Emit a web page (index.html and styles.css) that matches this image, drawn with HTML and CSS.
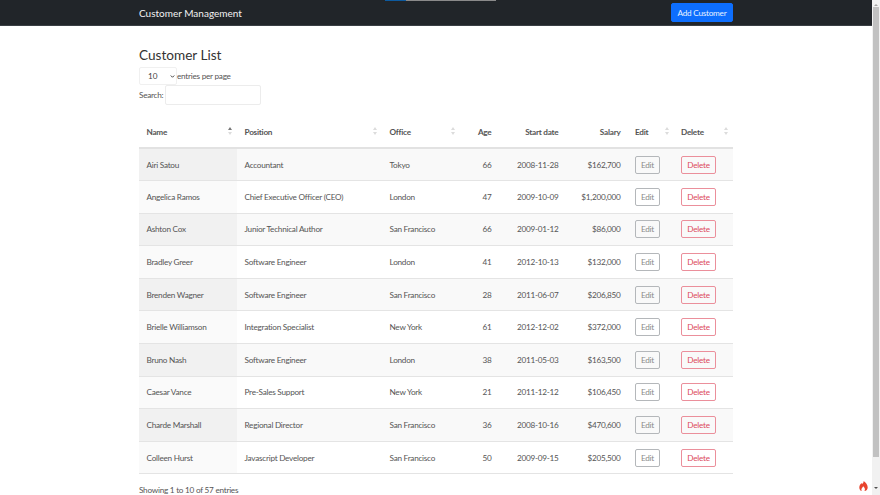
FILE: index.html
```html
<!DOCTYPE html>
<html lang="en">
<head>
    <meta charset="UTF-8">
    <meta name="viewport" content="width=device-width, initial-scale=1.0">
    <title>Customer Management</title>
    <link rel="stylesheet" href="styles.css">
</head>
<body>
    <div class="page">
        <nav class="navbar">
            <div class="loader"><span class="loader-done"></span><span class="loader-rest"></span></div>
            <div class="container navbar-row">
                <a class="brand">Customer Management</a>
                <button class="btn-add" type="button">Add Customer</button>
            </div>
        </nav>

        <main class="container">
            <h1>Customer List</h1>
            <div class="length-row">
                <select class="length-select"><option>10</option></select>
                <label>entries per page</label>
            </div>
            <div class="search-row">
                <label>Search:</label>
                <input class="search-input" type="text">
            </div>

            <table class="customers">
                <colgroup>
                    <col class="c-name"><col class="c-position"><col class="c-office"><col class="c-age">
                    <col class="c-date"><col class="c-salary"><col class="c-edit"><col class="c-delete">
                </colgroup>
                <thead>
                    <tr>
                        <th class="sort sort-asc">Name</th>
                        <th class="sort">Position</th>
                        <th class="sort">Office</th>
                        <th class="num">Age</th>
                        <th class="num">Start date</th>
                        <th class="num">Salary</th>
                        <th class="sort action">Edit</th>
                        <th class="sort action">Delete</th>
                    </tr>
                </thead>
                <tbody>
                    <tr><td class="sorted">Airi Satou</td><td>Accountant</td><td>Tokyo</td><td class="num">66</td><td class="num">2008-11-28</td><td class="num">$162,700</td><td class="action"><button class="btn btn-edit">Edit</button></td><td class="action"><button class="btn btn-delete">Delete</button></td></tr>
                    <tr><td class="sorted">Angelica Ramos</td><td>Chief Executive Officer (CEO)</td><td>London</td><td class="num">47</td><td class="num">2009-10-09</td><td class="num">$1,200,000</td><td class="action"><button class="btn btn-edit">Edit</button></td><td class="action"><button class="btn btn-delete">Delete</button></td></tr>
                    <tr><td class="sorted">Ashton Cox</td><td>Junior Technical Author</td><td>San Francisco</td><td class="num">66</td><td class="num">2009-01-12</td><td class="num">$86,000</td><td class="action"><button class="btn btn-edit">Edit</button></td><td class="action"><button class="btn btn-delete">Delete</button></td></tr>
                    <tr><td class="sorted">Bradley Greer</td><td>Software Engineer</td><td>London</td><td class="num">41</td><td class="num">2012-10-13</td><td class="num">$132,000</td><td class="action"><button class="btn btn-edit">Edit</button></td><td class="action"><button class="btn btn-delete">Delete</button></td></tr>
                    <tr><td class="sorted">Brenden Wagner</td><td>Software Engineer</td><td>San Francisco</td><td class="num">28</td><td class="num">2011-06-07</td><td class="num">$206,850</td><td class="action"><button class="btn btn-edit">Edit</button></td><td class="action"><button class="btn btn-delete">Delete</button></td></tr>
                    <tr><td class="sorted">Brielle Williamson</td><td>Integration Specialist</td><td>New York</td><td class="num">61</td><td class="num">2012-12-02</td><td class="num">$372,000</td><td class="action"><button class="btn btn-edit">Edit</button></td><td class="action"><button class="btn btn-delete">Delete</button></td></tr>
                    <tr><td class="sorted">Bruno Nash</td><td>Software Engineer</td><td>London</td><td class="num">38</td><td class="num">2011-05-03</td><td class="num">$163,500</td><td class="action"><button class="btn btn-edit">Edit</button></td><td class="action"><button class="btn btn-delete">Delete</button></td></tr>
                    <tr><td class="sorted">Caesar Vance</td><td>Pre-Sales Support</td><td>New York</td><td class="num">21</td><td class="num">2011-12-12</td><td class="num">$106,450</td><td class="action"><button class="btn btn-edit">Edit</button></td><td class="action"><button class="btn btn-delete">Delete</button></td></tr>
                    <tr><td class="sorted">Charde Marshall</td><td>Regional Director</td><td>San Francisco</td><td class="num">36</td><td class="num">2008-10-16</td><td class="num">$470,600</td><td class="action"><button class="btn btn-edit">Edit</button></td><td class="action"><button class="btn btn-delete">Delete</button></td></tr>
                    <tr><td class="sorted">Colleen Hurst</td><td>Javascript Developer</td><td>San Francisco</td><td class="num">50</td><td class="num">2009-09-15</td><td class="num">$205,500</td><td class="action"><button class="btn btn-edit">Edit</button></td><td class="action"><button class="btn btn-delete">Delete</button></td></tr>
                </tbody>
            </table>

            <p class="info">Showing 1 to 10 of 57 entries</p>
        </main>

        <div class="flame-badge">
            <svg width="9" height="10" viewBox="0 0 9 10"><path d="M4.6 0C5 1.6 3.6 2.2 3 3.2 2.8 2.8 2.7 2.4 2.6 2 1.2 3.2.3 4.8.3 6.4.3 8.4 1.4 9.600 2.800 10 2.200 9 2.300 7.900 3 7c.4-.6.900-1 1.100-1.700.7.700 1.800 1.700 1.800 3 0 .6-.2 1.200-.5 1.700C7.500 9.700 8.700 8.300 8.700 6.400 8.700 3.800 6.800 1.200 4.600 0z" fill="#e8442e"/></svg>
        </div>
    </div>

    <div class="scrollbar">
        <span class="arrow arrow-up"></span>
        <div class="thumb"></div>
        <span class="arrow arrow-down"></span>
    </div>
</body>
</html>
```

FILE: styles.css
```css
* {
    box-sizing: border-box;
}

html, body {
    margin: 0;
    height: 495px;
    overflow: hidden;
}

body {
    display: flex;
    font-family: Lato, "Open Sans", sans-serif;
    font-size: 8.200px;
    letter-spacing: -0.250px;
    color: #444;
    background: #fff;
}

.page {
    position: relative;
    flex: 1;
    min-width: 0;
}

.container {
    width: 594px;
    margin-left: 139px;
}

/* navbar */
.navbar {
    position: relative;
    height: 26px;
    background: #212529;
    border-bottom: 1px solid #3a3f44;
}

.loader {
    position: absolute;
    top: 0;
    left: 385px;
    display: flex;
    height: 1px;
}

.loader-done {
    width: 21px;
    background: #0d5a9e;
}

.loader-rest {
    width: 90px;
    background: #8a8a8a;
}

.navbar-row {
    display: flex;
    justify-content: space-between;
    align-items: center;
    height: 25px;
}

.brand {
    font-size: 10px;
    letter-spacing: 0;
    color: #f2f2f2;
}

.btn-add {
    width: 62px;
    height: 19px;
    padding: 0;
    font: inherit;
    letter-spacing: inherit;
    color: #e8f1ff;
    background: #0d6efd;
    border: 1px solid #0d6efd;
    border-radius: 2px;
}

/* heading and controls */
h1 {
    margin: 20px 0 0;
    font-size: 13.600px;
    font-weight: 400;
    letter-spacing: 0;
    line-height: 19px;
    color: #333;
}

.length-row, .search-row {
    display: flex;
    align-items: center;
    height: 18px;
    color: #555;
}

.length-row {
    margin-top: 2px;
}

.length-select {
    width: 38px;
    height: 18px;
    padding-left: 8px;
    font: inherit;
    color: #444;
    background: #fff url("data:image/svg+xml,%3Csvg xmlns='http://www.w3.org/2000/svg' viewBox='0 0 6 4'%3E%3Cpath d='M.7.7L3 3 5.300.7' fill='none' stroke='%23333' stroke-width='1.200'/%3E%3C/svg%3E") no-repeat right 1px center / 5px 3px;
    border: 1px solid #f0f0f0;
    border-radius: 2px;
    appearance: none;
}

.search-row {
    height: 20px;
}

.search-input {
    width: 96px;
    height: 20px;
    margin-left: 2px;
    background: #fff;
    border: 1px solid #ececec;
    border-radius: 2px;
}

/* table */
.customers {
    width: 594px;
    margin-top: 10px;
    table-layout: fixed;
    border-collapse: collapse;
}

.c-name { width: 98px; }
.c-position { width: 145px; }
.c-office { width: 78px; }
.c-age { width: 39px; }
.c-date { width: 67px; }
.c-salary { width: 62px; }
.c-edit { width: 46px; }
.c-delete { width: 59px; }

.customers th, .customers td {
    padding: 0 7.500px;
    text-align: left;
    white-space: nowrap;
}

.customers th {
    height: 33px;
    padding-top: 2px;
    font-weight: 700;
    color: #555;
    border-bottom: 2px solid #e2e2e2;
}

.customers td {
    height: 32.600px;
    color: #555;
    border-bottom: 1px solid #e4e4e4;
}

.customers .num {
    text-align: right;
}

.customers .action {
    padding-left: 7px;
}

.customers tbody tr:nth-child(odd) {
    background: #f9f9f9;
}

.customers tbody tr:nth-child(odd) .sorted {
    background: #f1f1f1;
}

.customers tbody tr:nth-child(even) .sorted {
    background: #fafafa;
}

/* sort arrows, drawn with two small triangles */
.sort {
    background-repeat: no-repeat;
    background-position: right 5px center;
    background-size: 4px 8px;
}

.customers th.sort {
    background-image: url("data:image/svg+xml,%3Csvg xmlns='http://www.w3.org/2000/svg' viewBox='0 0 4 8'%3E%3Cpath d='M2 0l2 3H0zM2 8L0 5h4z' fill='%23dcdcdc'/%3E%3C/svg%3E");
}

.customers th.sort-asc {
    background-image: url("data:image/svg+xml,%3Csvg xmlns='http://www.w3.org/2000/svg' viewBox='0 0 4 8'%3E%3Cpath d='M2 0l2 3H0z' fill='%23777'/%3E%3Cpath d='M2 8L0 5h4z' fill='%23dcdcdc'/%3E%3C/svg%3E");
}

/* row buttons */
.btn {
    display: block;
    height: 18px;
    padding: 0;
    font: inherit;
    letter-spacing: inherit;
    background: transparent;
    border-radius: 2px;
}

.btn-edit {
    width: 25px;
    color: #8a8a8a;
    border: 1px solid #b4b7ba;
}

.btn-delete {
    width: 35px;
    color: #dc4a5c;
    border: 1px solid #eb8f9b;
}

.info {
    margin: 12px 0 0;
    line-height: 9px;
    color: #555;
}

/* little badge in the bottom corner */
.flame-badge {
    position: absolute;
    right: 0;
    bottom: 0;
    display: flex;
    justify-content: center;
    align-items: center;
    width: 17px;
    height: 18px;
    background: #fff;
}

/* scrollbar */
.scrollbar {
    display: flex;
    flex-direction: column;
    align-items: center;
    flex: none;
    width: 8px;
    height: 495px;
    background: #f1f1f1;
}

.thumb {
    width: 6px;
    height: 450px;
    margin-top: 1px;
    background: #c1c1c1;
}

.arrow {
    width: 0;
    height: 0;
    border-left: 2px solid transparent;
    border-right: 2px solid transparent;
}

.arrow-up {
    margin-top: 4px;
    border-bottom: 2px solid #a3a3a3;
}

.arrow-down {
    margin-top: 30px;
    border-top: 2px solid #505050;
}
```
